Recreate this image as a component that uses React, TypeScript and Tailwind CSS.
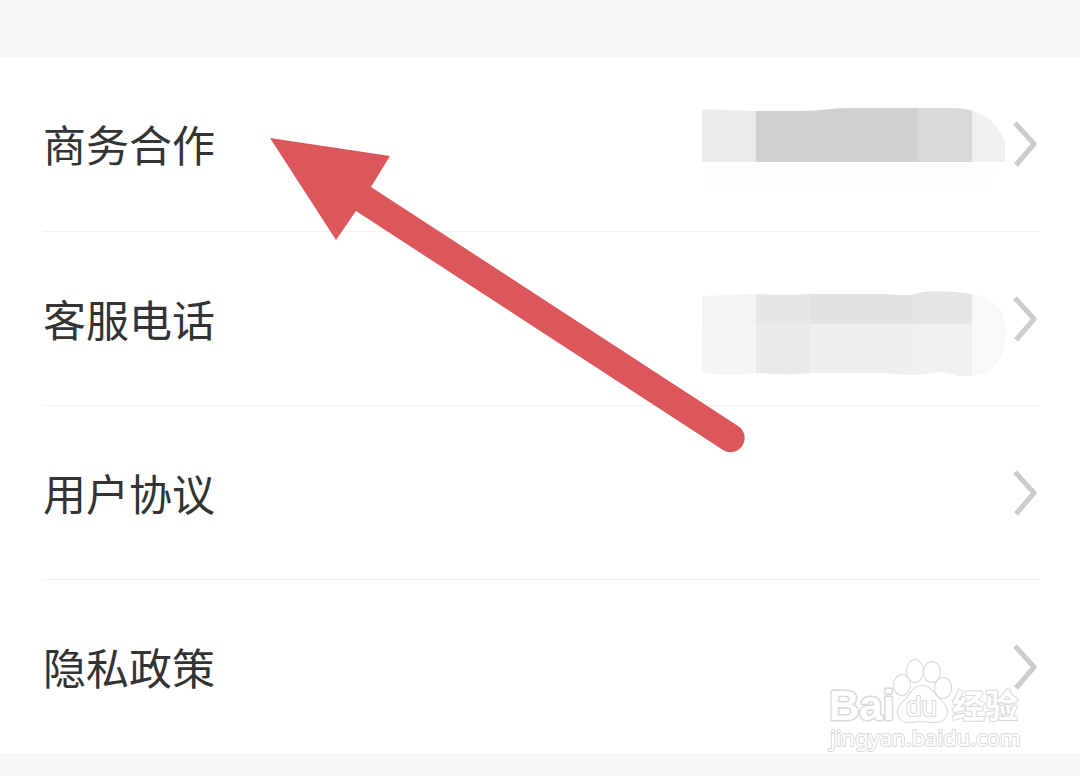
import React from 'react';

function SupportMask() {
  return (
    <svg className="w-[304px] h-[120px]" viewBox="0 0 304 120" aria-hidden="true">
      <defs>
        <clipPath id="mask-business">
          <path d="M0 25 Q25 26 50 27 H100 C118 27 128 24 146 24 H250 C281 24 296 39 303 58 V78 H0 Z" />
        </clipPath>
      </defs>
      <g clipPath="url(#mask-business)">
        <rect width="54" height="120" fill="#eaeaea" />
        <rect x="54" width="163" height="120" fill="#d1d1d1" />
        <rect x="216" width="54" height="120" fill="#d9d9d9" />
        <rect x="270" width="34" height="120" fill="#f0f0f0" />
      </g>
      <path d="M2 82 H298 V92 H290 V103 H2 Z" fill="#fdfdfd" />
    </svg>
  );
}

function PhoneMask() {
  return (
    <svg className="w-[304px] h-[120px]" viewBox="0 0 304 120" aria-hidden="true">
      <defs>
        <clipPath id="mask-phone">
          <path d="M0 37 L54 35 C75 36 88 36 108 35 H180 C198 36 208 37 216 34 C230 31 250 32 270 35 C292 37 304 51 304 74 C304 100 290 116 270 117 H256 C246 115 240 111 230 114 C205 118 195 114 175 114 H108 C90 116 75 115 54 114 C34 117 18 116 0 114 Z" />
        </clipPath>
      </defs>
      <g clipPath="url(#mask-phone)">
        <rect width="54" height="65" fill="#f3f3f3" />
        <rect y="65" width="54" height="55" fill="#f5f5f5" />
        <rect x="54" width="54" height="65" fill="#e6e6e6" />
        <rect x="54" y="65" width="54" height="55" fill="#e9e9e9" />
        <rect x="108" width="108" height="65" fill="#e2e2e2" />
        <rect x="108" y="65" width="108" height="55" fill="#eeeeee" />
        <rect x="216" width="54" height="65" fill="#e4e4e4" />
        <rect x="216" y="65" width="54" height="55" fill="#f0f0f0" />
        <rect x="270" width="34" height="120" fill="#f8f8f8" />
      </g>
    </svg>
  );
}

function Chevron() {
  return (
    <svg className="w-6 h-12" viewBox="0 0 24 48" fill="none" aria-hidden="true">
      <path d="M2 3 L21 24 L3 45" stroke="#cccccc" strokeWidth="5" strokeLinejoin="round" />
    </svg>
  );
}

function Arrow() {
  return (
    <svg
      className="absolute left-[270px] top-[81px] w-[476px] h-[316px] pointer-events-none"
      viewBox="0 0 476 316"
      aria-hidden="true"
    >
      <path d="M0 0 L120 18 L101 49 L468 288 A14 14 0 0 1 453 312 L86 73 L66 102 Z" fill="#db575c" />
    </svg>
  );
}

function Watermark() {
  return (
    <svg
      className="absolute right-14 bottom-[-3px] w-[200px] h-[100px] overflow-visible pointer-events-none"
      viewBox="0 0 200 100"
      fill="#ffffff"
      stroke="#d9d9d9"
      strokeWidth="3"
      strokeLinejoin="round"
      paintOrder="stroke"
      role="img"
      aria-label="Baidu 经验"
    >
      <text x="5" y="64" fontSize="42" className="font-['Liberation_Sans',sans-serif] font-bold">Bai</text>
      <g strokeWidth="2">
        <ellipse cx="78" cy="29" rx="8" ry="10" />
        <ellipse cx="91" cy="15" rx="8" ry="11" />
        <ellipse cx="108" cy="16" rx="8" ry="10" />
        <ellipse cx="119" cy="32" rx="8" ry="10" />
        <path d="M98 30 C106 30 109 36 113 41 C118 46 123 49 123 56 C123 63 117 66 110 66 C105 66 102 65 98 65 C93 65 90 66 85 66 C78 66 74 62 74 56 C74 49 79 47 84 41 C88 36 90 30 98 30 Z" />
      </g>
      <text x="82" y="60" fontSize="28" strokeWidth="2" className="font-['Liberation_Sans',sans-serif]">du</text>
      <text x="128" y="62" fontSize="33" strokeWidth="2" className="font-['Noto_Sans_CJK_SC',sans-serif] font-bold">经验</text>
      <text x="6" y="90" fontSize="22" strokeWidth="2" className="font-['Noto_Sans',sans-serif]">jingyan.baidu.com</text>
    </svg>
  );
}

const items = [
  { label: '商务合作', mask: <SupportMask /> },
  { label: '客服电话', mask: <PhoneMask /> },
  { label: '用户协议', mask: null },
  { label: '隐私政策', mask: null },
];

export default function App() {
  return (
    <div className="min-h-screen bg-[#f7f7f7] pt-[57px] font-['Noto_Sans_CJK_SC',sans-serif]">
      <main className="relative bg-white">
        <ul>
          {items.map((item, index) => (
            <li key={item.label} className="pl-[43px] pr-10">
              <a
                href="#"
                className={`flex items-center justify-between h-[174px] ${index > 0 ? 'border-t border-[#f2f2f2]' : ''}`}
              >
                <span className="pb-[2px] text-[43px] leading-[60px] text-[#333333]">{item.label}</span>
                <span className="flex items-center gap-[7px] pr-[3px]">
                  {item.mask}
                  <Chevron />
                </span>
              </a>
            </li>
          ))}
        </ul>
        <Arrow />
        <Watermark />
      </main>
    </div>
  );
}
